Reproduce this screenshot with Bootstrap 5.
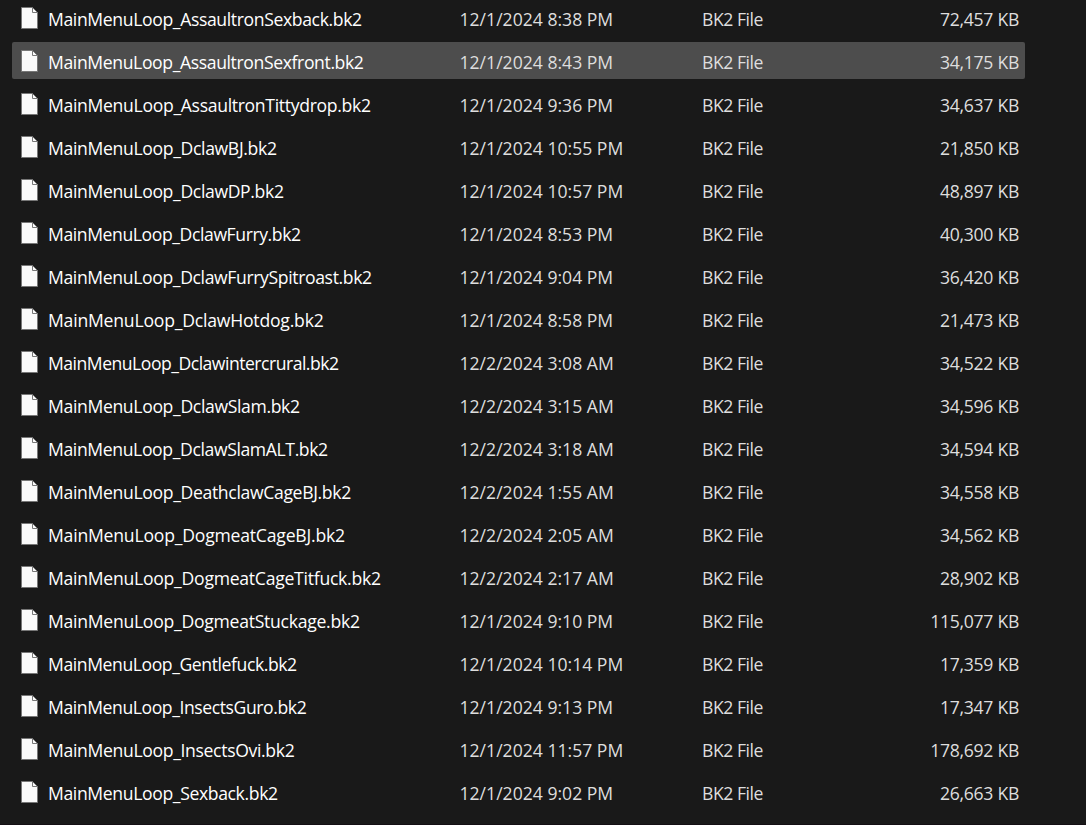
<!DOCTYPE html>
<html lang="en">
<head>
<meta charset="utf-8">
<meta name="viewport" content="width=device-width, initial-scale=1">
<title>Files</title>
<link rel="stylesheet" href="https://cdn.jsdelivr.net/npm/bootstrap@5.3.0/dist/css/bootstrap.min.css">
<style>
  body { background: #191919; color: #fff; font-family: "Open Sans", "Noto Sans", sans-serif; font-size: 17.6px; line-height: 41px; border-bottom: 1px solid #140f14; }
  .file-list { width: 1013px; margin: -1px 0 0 12px; gap: 6px; }
  .file-row { height: 37px; border-radius: 2px; color: #dedede; white-space: nowrap; }
  .file-row.hovered { background: #4d4d4d; }
  .file-icon { width: 17px; height: 22px; margin: 8px 10px 0 9px; }
  .file-name { width: 411.5px; color: #fff; }
  .file-date { width: 242.5px; }
  .file-type { width: 150px; letter-spacing: -.45px; }
  .file-size { padding-right: 6px; letter-spacing: -.28px; }
</style>
</head>
<body class="vh-100 overflow-hidden">
<svg class="d-none">
  <symbol id="page" viewBox="0 0 17 22">
    <path d="M.5.5h11l5 5v16H.5z" fill="#fafafa" stroke="#777"/>
    <path d="M11.5.5v5h5" fill="none" stroke="#777"/>
  </symbol>
</svg>
<main class="file-list d-flex flex-column" id="files"></main>
<script src="https://cdn.jsdelivr.net/npm/bootstrap@5.3.0/dist/js/bootstrap.bundle.min.js"></script>
<script>
  // name, modified, size in KB, letter spacing of the name
  const files = [
    ["AssaultronSexback", "12/1/2024 8:38 PM", "72,457", -.37],
    ["AssaultronSexfront", "12/1/2024 8:43 PM", "34,175", -.38],
    ["AssaultronTittydrop", "12/1/2024 9:36 PM", "34,637", -.32],
    ["DclawBJ", "12/1/2024 10:55 PM", "21,850", -.34],
    ["DclawDP", "12/1/2024 10:57 PM", "48,897", -.35],
    ["DclawFurry", "12/1/2024 8:53 PM", "40,300", -.41],
    ["DclawFurrySpitroast", "12/1/2024 9:04 PM", "36,420", -.37],
    ["DclawHotdog", "12/1/2024 8:58 PM", "21,473", -.21],
    ["Dclawintercrural", "12/2/2024 3:08 AM", "34,522", -.5],
    ["DclawSlam", "12/2/2024 3:15 AM", "34,596", -.35],
    ["DclawSlamALT", "12/2/2024 3:18 AM", "34,594", -.38],
    ["DeathclawCageBJ", "12/2/2024 1:55 AM", "34,558", -.34],
    ["DogmeatCageBJ", "12/2/2024 2:05 AM", "34,562", -.21],
    ["DogmeatCageTitfuck", "12/2/2024 2:17 AM", "28,902", -.26],
    ["DogmeatStuckage", "12/1/2024 9:10 PM", "115,077", -.27],
    ["Gentlefuck", "12/1/2024 10:14 PM", "17,359", -.42],
    ["InsectsGuro", "12/1/2024 9:13 PM", "17,347", -.42],
    ["InsectsOvi", "12/1/2024 11:57 PM", "178,692", -.34],
    ["Sexback", "12/1/2024 9:02 PM", "26,663", -.37]
  ];
  document.getElementById("files").innerHTML = files.map(([name, date, size, track], i) => `
    <div class="file-row d-flex flex-shrink-0${i === 1 ? " hovered" : ""}">
      <svg class="file-icon flex-shrink-0"><use href="#page"/></svg>
      <span class="file-name flex-shrink-0" style="letter-spacing:${track}px">MainMenuLoop_${name}.bk2</span>
      <span class="file-date flex-shrink-0">${date}</span>
      <span class="file-type flex-shrink-0">BK2 File</span>
      <span class="file-size flex-grow-1 text-end">${size} KB</span>
    </div>`).join("");
</script>
</body>
</html>
